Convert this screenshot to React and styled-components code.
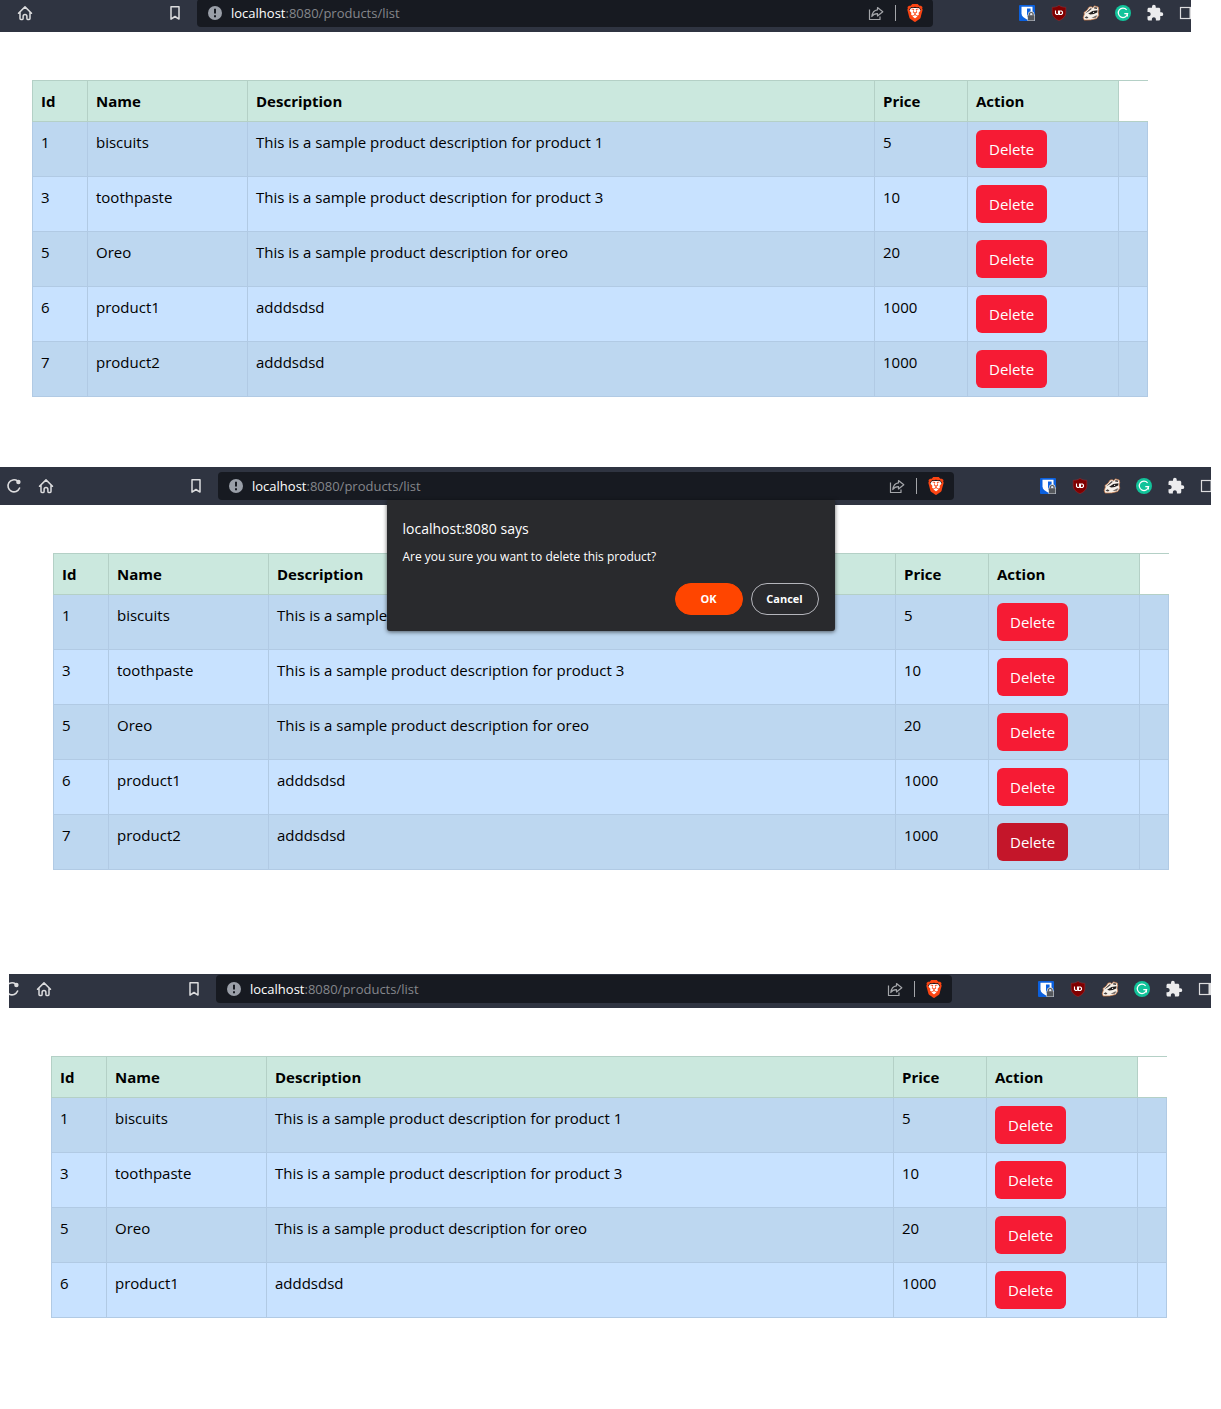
import React from "react";
import styled, { createGlobalStyle } from "styled-components";
import { SiBrave } from "react-icons/si";
import { MdExtension } from "react-icons/md";

const GlobalStyle = createGlobalStyle`
  *, *::before, *::after { box-sizing: border-box; }
  body {
    margin: 0;
    background: #ffffff;
    color: #000000;
    font-family: "Open Sans", "Noto Sans", sans-serif;
    font-size: 15px;
    line-height: 24px;
  }
  button, input { font: inherit; }
`;

const Page = styled.main`
  padding-bottom: 91px;
`;

const Capture = styled.section`
  position: relative;
  padding-left: ${(p) => p.$left}px;
  padding-right: ${(p) => p.$right}px;
  margin-bottom: ${(p) => p.$after}px;
`;

const Toolbar = styled.header`
  height: ${(p) => p.$height}px;
  overflow: hidden;
  background: #2f3441;
`;

const ToolbarRow = styled.div`
  display: flex;
  align-items: center;
  height: 28px;
  margin: ${(p) => p.$top}px -${(p) => p.$bleed}px 0 ${(p) => p.$lead}px;
`;

const NavGroup = styled.nav`
  display: flex;
  flex: none;
  gap: 16px;
`;

const IconButton = styled.button`
  display: flex;
  align-items: center;
  justify-content: center;
  flex: none;
  width: 16px;
  height: 16px;
  padding: 0;
  border: 0;
  background: none;
  color: #dcdcde;
  cursor: pointer;

  svg { flex: none; overflow: visible; }
`;

const BookmarkSlot = styled.div`
  flex: none;
  margin: 0 14px 0 134px;
`;

const AddressBox = styled.div`
  display: flex;
  align-items: center;
  flex: 1;
  min-width: 0;
  height: 28px;
  padding: 0 10px;
  border-radius: 4px;
  background: #171a21;
`;

const Address = styled.label`
  display: flex;
  flex: 1;
  min-width: 0;
  margin-left: 8px;
  font-size: 13px;
  line-height: 20px;
  color: #ffffff;
`;

const AddressPath = styled.input`
  flex: 1;
  min-width: 0;
  height: 20px;
  padding: 0;
  border: 0;
  outline: 0;
  background: none;
  color: #85878c;
`;

const Divider = styled.span`
  width: 1px;
  height: 16px;
  margin: 0 11px;
  background: #a4a6aa;
`;

const Extensions = styled.div`
  display: flex;
  flex: none;
  gap: 16px;
  margin-left: 86px;
`;

const TableArea = styled.div`
  padding: 48px ${(p) => p.$right}px 0 ${(p) => p.$left}px;
`;

const ProductTable = styled.table`
  width: 100%;
  table-layout: fixed;
  border-collapse: collapse;
`;

const Col = styled.col`
  width: ${(p) => (p.$width ? `${p.$width}px` : "auto")};
`;

const HeadCell = styled.th`
  padding: 8px;
  border: 1px solid #b4d0c6;
  background: #cbe8de;
  font-weight: 700;
  text-align: left;
`;

const BlankHeadCell = styled.td`
  padding: 8px;
  border-top: 1px solid #b4d0c6;
  border-bottom: 1px solid #b4d0c6;
`;

const BodyRow = styled.tr`
  background: #c8e2ff;

  &:nth-child(odd) { background: #bdd7f0; }
`;

const Cell = styled.td`
  padding: 8px;
  border: 1px solid #b1cae4;
  vertical-align: top;
`;

const DeleteButton = styled.button`
  display: block;
  height: 38px;
  padding: 6px 13px;
  border: 0;
  border-radius: 6px;
  background: ${(p) => (p.$pressed ? "#c4162a" : "#f61b34")};
  color: #ffffff;
  cursor: pointer;
`;

const DialogLayer = styled.div`
  position: absolute;
  top: 33px;
  left: 0;
  right: 0;
  display: flex;
  justify-content: center;
`;

const Dialog = styled.div`
  width: 448px;
  padding: 19px 16px 16px;
  border-radius: 0 0 3px 3px;
  background: #292a2d;
  color: #ffffff;
  box-shadow: 0 1px 4px rgba(0, 0, 0, 0.6);
`;

const DialogTitle = styled.h2`
  margin: 0 0 8px;
  font-size: 14px;
  font-weight: 400;
  line-height: 20px;
`;

const DialogText = styled.p`
  margin: 0 0 16px;
  font-size: 12px;
  font-weight: 500;
  line-height: 20px;
`;

const DialogActions = styled.div`
  display: flex;
  justify-content: flex-end;
  gap: 8px;
`;

const DialogButton = styled.button`
  width: 68px;
  height: 32px;
  padding: 0;
  border: 1px solid ${(p) => (p.$primary ? "#ff4500" : "#b4b5bb")};
  border-radius: 16px;
  background: ${(p) => (p.$primary ? "#ff4500" : "transparent")};
  color: #ffffff;
  font-size: 11px;
  font-weight: 700;
  line-height: 20px;
  cursor: pointer;
`;

const LogoStack = styled.span`
  display: grid;
  place-items: center;
  color: #fb4513;

  > svg { grid-area: 1 / 1; }
`;

const ReloadIcon = () => (
  <svg width="16" height="16" viewBox="0 0 16 16" fill="none" stroke="currentColor" strokeWidth="1.6">
    <path d="M11.6 3A6 6 0 1 0 13.6 10" strokeLinecap="round" />
    <circle cx="12.4" cy="4" r="2.2" fill="currentColor" stroke="none" />
  </svg>
);

const HomeIcon = () => (
  <svg width="16" height="16" viewBox="0 0 16 16" fill="none" stroke="currentColor" strokeWidth="1.5" strokeLinejoin="round" strokeLinecap="round">
    <path d="M1.5 8.2 8 1.9l6.5 6.3M3 7.2v6.3q0 .9.9.9h1.5q.7 0 .7-.8v-2.2a1.9 1.9 0 0 1 3.8 0v2.2q0 .8.7.8h1.500q.9 0 .9-.9V7.2" />
  </svg>
);

const BookmarkIcon = () => (
  <svg width="16" height="16" viewBox="0 0 16 16" fill="none" stroke="currentColor" strokeWidth="1.5" strokeLinejoin="round">
    <path d="M4 1.7h8v12.4l-4-2.6-4 2.6z" />
  </svg>
);

const InfoIcon = () => (
  <svg width="16" height="16" viewBox="0 0 16 16">
    <circle cx="8" cy="8" r="7" fill="#9a9fa8" />
    <path d="M8 3.8v4.8M8 10.3v2" stroke="#171a21" strokeWidth="2" />
  </svg>
);

const ShareIcon = () => (
  <svg width="16" height="16" viewBox="0 0 16 16" fill="none" stroke="#a4a6aa" strokeWidth="1.2" strokeLinejoin="round">
    <path d="M1.5 4.5v10H12v-3" />
    <path d="M9.5 2.5 14.8 6.8 9.5 11V8.7C7 8.6 5.2 9.5 3.8 11.5 4.3 7.5 6 5.2 9.5 4.8z" />
  </svg>
);

const BraveIcon = () => (
  <LogoStack>
    <svg width="18" height="18" viewBox="0 0 18 18">
      <path d="M5 4h8l1.5 2.500-2 6L9 15.500 5.500 12.500l-2-6z" fill="#ffffff" />
    </svg>
    <SiBrave size={18} />
  </LogoStack>
);

const VaultIcon = () => (
  <svg width="16" height="16" viewBox="0 0 16 16">
    <rect width="16" height="16" rx="1" fill="#0b60de" />
    <path d="M2.5 1.8h11v6.7c0 2.7-2.7 4.6-5.5 6C5.2 13.1 2.5 11.2 2.5 8.5z" fill="#ffffff" />
    <path d="M8 3.6h3.6v4.9c0 1.5-1.7 2.9-3.600 4z" fill="#0b60de" />
    <rect x="8.3" y="9.6" width="7.7" height="6.4" rx="0.8" fill="#d4d7dc" />
    <path d="M10.2 10.5V9.4a2 2 0 0 1 4 0v1.1" fill="none" stroke="#d4d7dc" strokeWidth="2.4" />
    <path d="M10.3 10.5V9.4a1.9 1.9 0 0 1 3.8 0v1.1" fill="none" stroke="#55585d" strokeWidth="1.2" />
    <rect x="9" y="10.3" width="6.4" height="5.2" rx="0.5" fill="#55585d" />
  </svg>
);

const BlockerIcon = () => (
  <svg width="16" height="16" viewBox="0 0 16 16">
    <path d="M8 .4c2 1.4 4.300 1.900 6.800 1.900v5.200c0 4-2.700 6.300-6.800 8.100C3.900 13.800 1.200 11.500 1.200 7.500V2.300C3.700 2.300 6 1.800 8 .4z" fill="#800000" stroke="#a22a30" strokeWidth="0.5" />
    <path d="M4.500 5.500v3l1 1h1.500l.5-.5V5.500M8.500 6H10.500l1 1v1.500l-1 1h-2z" fill="none" stroke="#ffffff" strokeWidth="1.1" />
  </svg>
);

const BadgerIcon = () => (
  <svg width="16" height="16" viewBox="0 0 16 16">
    <path d="M.2 12.8 1.4 9 .9 7.6 4 5.2 6.2 2 8.5 1.8l1 1L11.6.9l3.7 1.2.4 2.6-.6 2.3.7 3.2-2.200 3.300-6 1.400-6.400.2z" fill="#f7f1ea" stroke="#d07a44" strokeWidth="0.7" strokeLinejoin="round" />
    <path d="M2 8.500 4.600 6 7.500 3.200l1.500.6-3.500 2.700z" fill="#4a4340" />
    <path d="M5.200 8.700 9.500 6l5-.8-.4 2.200-3.300 1.600-3.400.5z" fill="#221f1e" />
    <path d="m11.500 2 2.700.6-.2 1.300-3-.3z" fill="#4a4340" />
    <path d="m1.500 12.800 2-1.500 2 1.200-1.500 1z" fill="#4a4340" />
    <path d="m8.500 13 4-2.200 2-.6-1.700 2.500z" fill="#6f6560" />
    <circle cx="10.6" cy="7.300" r="0.600" fill="#ffffff" />
  </svg>
);

const GrammarIcon = () => (
  <svg width="16" height="16" viewBox="0 0 16 16" fill="none" stroke="#ffffff" strokeWidth="1.2">
    <circle cx="8" cy="8" r="8" fill="#12c39a" stroke="none" />
    <path d="M11.6 4.8A4.7 4.7 0 1 0 12.6 8.7H9.3" />
    <path d="M12.4 11.6V8.7" />
  </svg>
);

const PanelIcon = () => (
  <svg width="16" height="16" viewBox="0 0 16 16">
    <rect x="1.5" y="2.5" width="13" height="11" fill="none" stroke="#dcdcde" strokeWidth="1.2" />
    <path d="M10.5 2H15v12h-4.500z" fill="#dcdcde" />
  </svg>
);

const extensions = [
  ["Password vault", <VaultIcon />],
  ["Content blocker", <BlockerIcon />],
  ["Privacy helper", <BadgerIcon />],
  ["Writing assistant", <GrammarIcon />],
  ["Extensions", <MdExtension size={18} color="#ececee" />],
  ["Side panel", <PanelIcon />],
];

const products = [
  { id: 1, name: "biscuits", description: "This is a sample product description for product 1", price: 5 },
  { id: 3, name: "toothpaste", description: "This is a sample product description for product 3", price: 10 },
  { id: 5, name: "Oreo", description: "This is a sample product description for oreo", price: 20 },
  { id: 6, name: "product1", description: "adddsdsd", price: 1000 },
  { id: 7, name: "product2", description: "adddsdsd", price: 1000 },
];

function BrowserBar({ height, top, lead, bleed, reload }) {
  return (
    <Toolbar $height={height}>
      <ToolbarRow $top={top} $lead={lead} $bleed={bleed}>
        <NavGroup>
          {reload && <IconButton aria-label="Reload"><ReloadIcon /></IconButton>}
          <IconButton aria-label="Home"><HomeIcon /></IconButton>
        </NavGroup>
        <BookmarkSlot>
          <IconButton aria-label="Bookmark"><BookmarkIcon /></IconButton>
        </BookmarkSlot>
        <AddressBox>
          <IconButton aria-label="Site information"><InfoIcon /></IconButton>
          <Address>
            <span>localhost</span>
            <AddressPath type="text" defaultValue=":8080/products/list" />
          </Address>
          <IconButton aria-label="Share"><ShareIcon /></IconButton>
          <Divider />
          <IconButton aria-label="Shields"><BraveIcon /></IconButton>
        </AddressBox>
        <Extensions>
          {extensions.map(([label, icon]) => (
            <IconButton key={label} aria-label={label}>{icon}</IconButton>
          ))}
        </Extensions>
      </ToolbarRow>
    </Toolbar>
  );
}

function Products({ items, pressedId }) {
  return (
    <ProductTable>
      <colgroup>
        <Col $width={55} />
        <Col $width={160} />
        <Col />
        <Col $width={93} />
        <Col $width={151} />
        <Col $width={29} />
      </colgroup>
      <thead>
        <tr>
          {["Id", "Name", "Description", "Price", "Action"].map((title) => (
            <HeadCell key={title} scope="col">{title}</HeadCell>
          ))}
          <BlankHeadCell />
        </tr>
      </thead>
      <tbody>
        {items.map((item) => (
          <BodyRow key={item.id}>
            <Cell>{item.id}</Cell>
            <Cell>{item.name}</Cell>
            <Cell>{item.description}</Cell>
            <Cell>{item.price}</Cell>
            <Cell>
              <DeleteButton type="button" $pressed={item.id === pressedId}>Delete</DeleteButton>
            </Cell>
            <Cell />
          </BodyRow>
        ))}
      </tbody>
    </ProductTable>
  );
}

export default function App() {
  return (
    <>
      <GlobalStyle />
      <Page>
        <Capture $left={0} $right={30} $after={70}>
          <BrowserBar height={32} top={-1} lead={17} bleed={4} />
          <TableArea $left={32} $right={43}>
            <Products items={products} />
          </TableArea>
        </Capture>

        <Capture $left={0} $right={10} $after={104}>
          <BrowserBar height={38} top={5} lead={6} bleed={5} reload />
          <TableArea $left={53} $right={42}>
            <Products items={products} pressedId={7} />
          </TableArea>
          <DialogLayer>
            <Dialog role="alertdialog" aria-labelledby="confirm-title" aria-describedby="confirm-text">
              <DialogTitle id="confirm-title">localhost:8080 says</DialogTitle>
              <DialogText id="confirm-text">Are you sure you want to delete this product?</DialogText>
              <DialogActions>
                <DialogButton type="button" $primary>OK</DialogButton>
                <DialogButton type="button">Cancel</DialogButton>
              </DialogActions>
            </Dialog>
          </DialogLayer>
        </Capture>

        <Capture $left={9} $right={10} $after={0}>
          <BrowserBar height={34} top={1} lead={-5} bleed={3} reload />
          <TableArea $left={42} $right={44}>
            <Products items={products.slice(0, 4)} />
          </TableArea>
        </Capture>
      </Page>
    </>
  );
}
